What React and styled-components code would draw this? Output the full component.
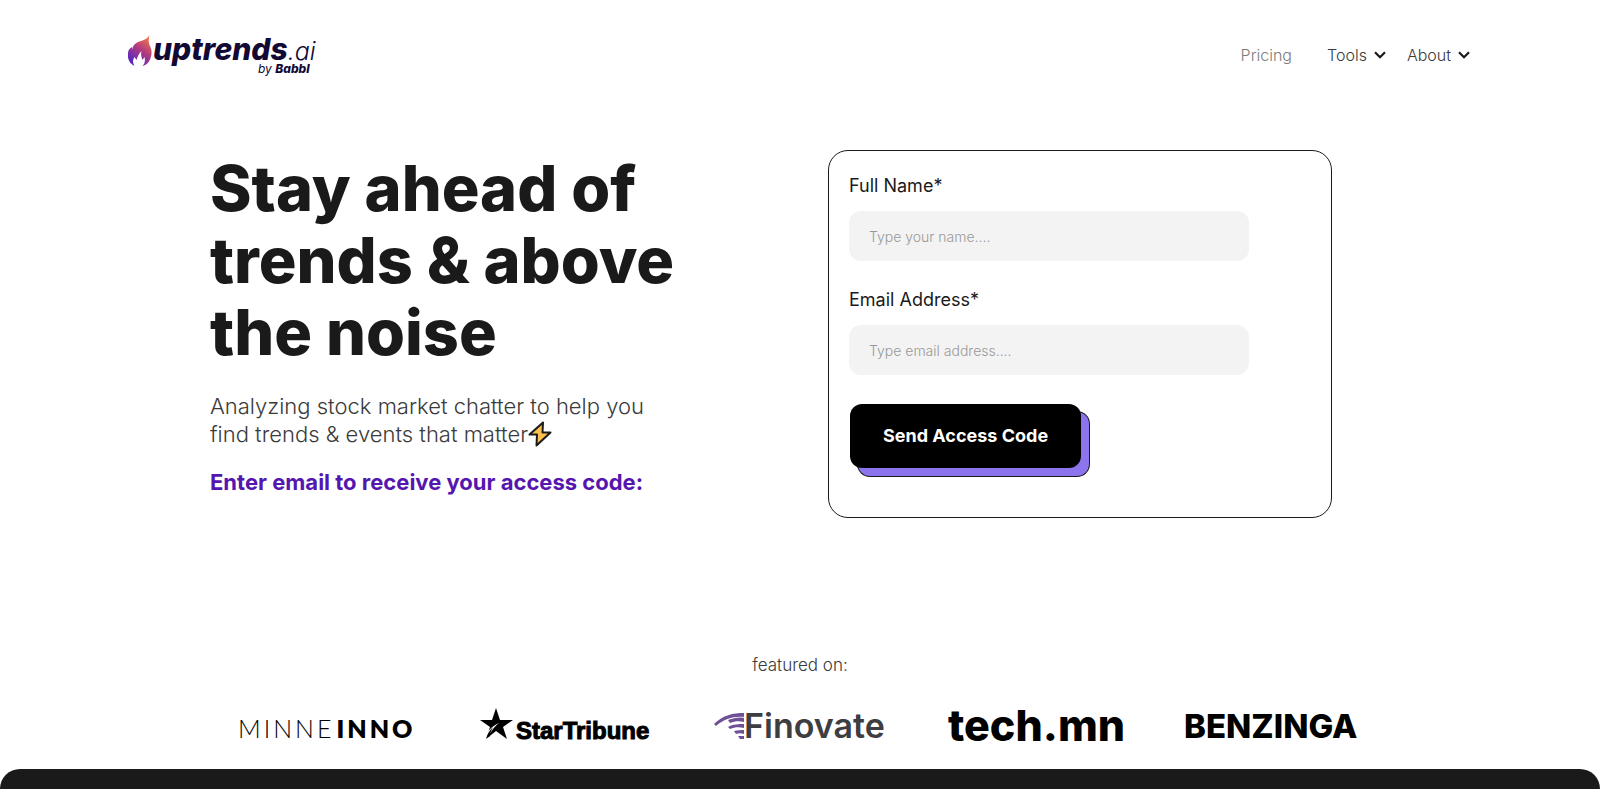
import React from 'react';
import styled, { createGlobalStyle } from 'styled-components';

const GlobalStyle = createGlobalStyle`
    *{
        box-sizing:border-box;
    }
    body{
        margin:0;
        background:#ffffff;
        color:#1a1a1a;
        font-family:Inter, "Liberation Sans", sans-serif;
    }
`;

const Page = styled.div`
    min-height:100vh;
    display:flex;
    flex-direction:column;
`;

const Header = styled.header`
    display:flex;
    align-items:center;
    justify-content:space-between;
    padding:32px 8% 0 8%;
`;

const Brand = styled.a`
    display:flex;
    color:#120a35;
`;

const Nav = styled.nav`
    display:flex;
    align-items:center;
    gap:21px;
    padding-right:2px;
`;

const NavLink = styled.a`
    display:flex;
    align-items:center;
    gap:7px;
    margin-right:${props => (props.$muted ? "14px" : "0")};
    color:${props => (props.$muted ? "#7d7d7d" : "#3a3a3a")};
    font-size:16px;
    line-height:24px;
    font-weight:300;
    text-decoration:none;
`;

const Hero = styled.main`
    display:grid;
    grid-template-columns:1fr 504px;
    align-items:start;
    padding:72px 268px 0 210px;
`;

const Title = styled.h1`
    max-width:520px;
    margin:2px 0 24px;
    font-size:63px;
    line-height:72px;
    font-weight:800;
`;

const Lead = styled.p`
    margin:0 0 18px;
    color:#3a3a3a;
    font-size:22px;
    line-height:28px;
    font-weight:300;
`;

const BoltIcon = styled.svg`
    vertical-align:-5px;
`;

const Prompt = styled.p`
    margin:0;
    color:#5516b0;
    font-size:22px;
    line-height:32px;
    font-weight:700;
`;

const Form = styled.form`
    display:flex;
    flex-direction:column;
    align-items:flex-start;
    padding:23px 20px 49px;
    border:1px solid #1a1a1a;
    border-radius:20px;
`;

const Label = styled.label`
    margin-bottom:13px;
    font-size:18px;
    line-height:24px;
`;

const TextField = styled.input`
    width:400px;
    height:50px;
    margin-bottom:27px;
    padding:0 20px;
    border:0;
    border-radius:12px;
    background:#f3f3f3;
    font:300 14px/24px Inter, "Liberation Sans", sans-serif;
    &::placeholder{
        color:#999999;
        opacity:1;
    }
`;

const Submit = styled.button`
    margin:2px 0 0 1px;
    padding:20px 33px;
    border:0;
    border-radius:12px;
    background:#000000;
    box-shadow:8px 8px 0 #8b74ee, 8px 8px 0 1px #1a1a1a;
    color:#ffffff;
    font:700 18px/24px Inter, "Liberation Sans", sans-serif;
`;

const Featured = styled.section`
    padding:135px 0 24px;
`;

const FeaturedText = styled.p`
    margin:0 0 20px;
    color:#3a3a3a;
    font-size:17px;
    line-height:24px;
    font-weight:300;
    text-align:center;
`;

const Logos = styled.div`
    display:grid;
    grid-template-columns:repeat(5, 1fr);
    padding:0 186px 0 238px;
`;

const Logo = styled.svg.attrs({ width: 190, height: 48, viewBox: "0 -8 190 48" })`
    font-family:${props => props.$font || "Inter"}, sans-serif;
`;

const Footer = styled.footer`
    flex:1;
    min-height:20px;
    border-radius:22px 22px 0 0;
    background:#1a1a1a;
`;

const Chevron = () => (
    <svg width="12" height="8" viewBox="0 0 12 8" aria-hidden="true">
        <path d="M1 1.300 6 6.300l5-5" fill="none" stroke="#1a1a1a" strokeWidth="2.200" />
    </svg>
);

const Bolt = () => (
    <BoltIcon width="24" height="26" viewBox="0 0 24 26" aria-hidden="true">
        <path d="M15 1.500 1.500 13.500h7.500L8.500 24.500 22.500 11.500h-8z" fill="#fdc04c" stroke="#1a1a1a" strokeWidth="2" strokeLinejoin="round" />
    </BoltIcon>
);

const UptrendsLogo = () => (
    <svg width="196" height="46" viewBox="0 0 196 46" role="img" aria-label="uptrends.ai by Babbl">
        <defs>
            <linearGradient id="flame" x1="0.8" y1="0" x2="0.2" y2="1">
                <stop offset="0" stopColor="#f47a45" />
                <stop offset="0.45" stopColor="#b23a80" />
                <stop offset="1" stopColor="#4a22d0" />
            </linearGradient>
        </defs>
        <path d="M21.500 3c-1 5-1 7 0 10 2 4 3 8 1 13-1 4-4 7-8 8 2-2 3-5 2-9l-2 3c-1-3-2-5-1-9-3 3-4 6-5 9l-2-3c-2 3-2 6 0 9C2 32-1 27 0 21c0-3 2-5 4-6v3c1-6 5-8 9-9 4-1 7-3 8.500-6z" fill="url(#flame)" />
        <text x="25" y="28" fill="#120a35" fontSize="30" fontStyle="italic" fontWeight="800">uptrends<tspan fontSize="25" fontWeight="300">.ai</tspan></text>
        <text x="130" y="41" fill="#120a35" fontSize="12" fontStyle="italic">by <tspan fontWeight="800">Babbl</tspan></text>
    </svg>
);

const MinneInno = () => (
    <Logo $font="Lato" fontSize="25">
        <text x="0" y="33" fontWeight="300" letterSpacing="3">MINNE<tspan dx="2" fontWeight="800">INNO</tspan></text>
    </Logo>
);

const StarTribune = () => (
    <Logo $font="Liberation Sans">
        <path d="m23 3 4 12h13l-10 7 4 12-11-8-10 8 4-12-10-7h12z" />
        <path d="M11 34c3-8 8-13 15-16-5 4-9 9-11 16z" fill="#ffffff" />
        <path d="M13 34c1-5 4-9 7-12-2 4-3 6-3 9z" />
        <text x="43" y="34" fontSize="24" fontWeight="700" stroke="#000000" strokeWidth="1">StarTribune</text>
    </Logo>
);

const Finovate = () => (
    <Logo>
        <path d="M6 19C15 10 25 8 36 8v4C26 11 16 14 8 21zM20 15c6-2 11-3 16-2v4c-5-1-9-1-14 1zM20 22c5-3 11-3 16-3v4c-5-1-9-1-14 1zM26 26c4-1 7-1 10-1v4c-3-1-6-1-8 0zM30 31h6v3h-4z" fill="#6f5096" />
        <text x="36" y="33" fill="#3d3d42" fontSize="34" fontWeight="600">Finovate</text>
    </Logo>
);

const TechMn = () => (
    <Logo>
        <text x="4" y="36" fontSize="43" fontWeight="800">tech.mn</text>
    </Logo>
);

const Benzinga = () => (
    <Logo>
        <text x="5" y="33" fontSize="33" fontWeight="800">BENZINGA</text>
    </Logo>
);

class App extends React.Component {
    render() {
        return (
        <Page>
            <GlobalStyle />
            <Header>
                <Brand href="#"><UptrendsLogo /></Brand>
                <Nav>
                    <NavLink href="#pricing" $muted>Pricing</NavLink>
                    <NavLink href="#tools">Tools <Chevron /></NavLink>
                    <NavLink href="#about">About <Chevron /></NavLink>
                </Nav>
            </Header>
            <Hero>
                <div>
                    <Title>Stay ahead of<br />trends &amp; above<br />the noise</Title>
                    <Lead>Analyzing stock market chatter to help you<br />find trends &amp; events that matter<Bolt /></Lead>
                    <Prompt>Enter email to receive your access code:</Prompt>
                </div>
                <Form>
                    <Label htmlFor="name">Full Name*</Label>
                    <TextField id="name" type="text" placeholder="Type your name...." />
                    <Label htmlFor="email">Email Address*</Label>
                    <TextField id="email" type="email" placeholder="Type email address...." />
                    <Submit type="button">Send Access Code</Submit>
                </Form>
            </Hero>
            <Featured>
                <FeaturedText>featured on:</FeaturedText>
                <Logos>
                    <MinneInno />
                    <StarTribune />
                    <Finovate />
                    <TechMn />
                    <Benzinga />
                </Logos>
            </Featured>
            <Footer />
        </Page>
        );
    }
}

export default App;
